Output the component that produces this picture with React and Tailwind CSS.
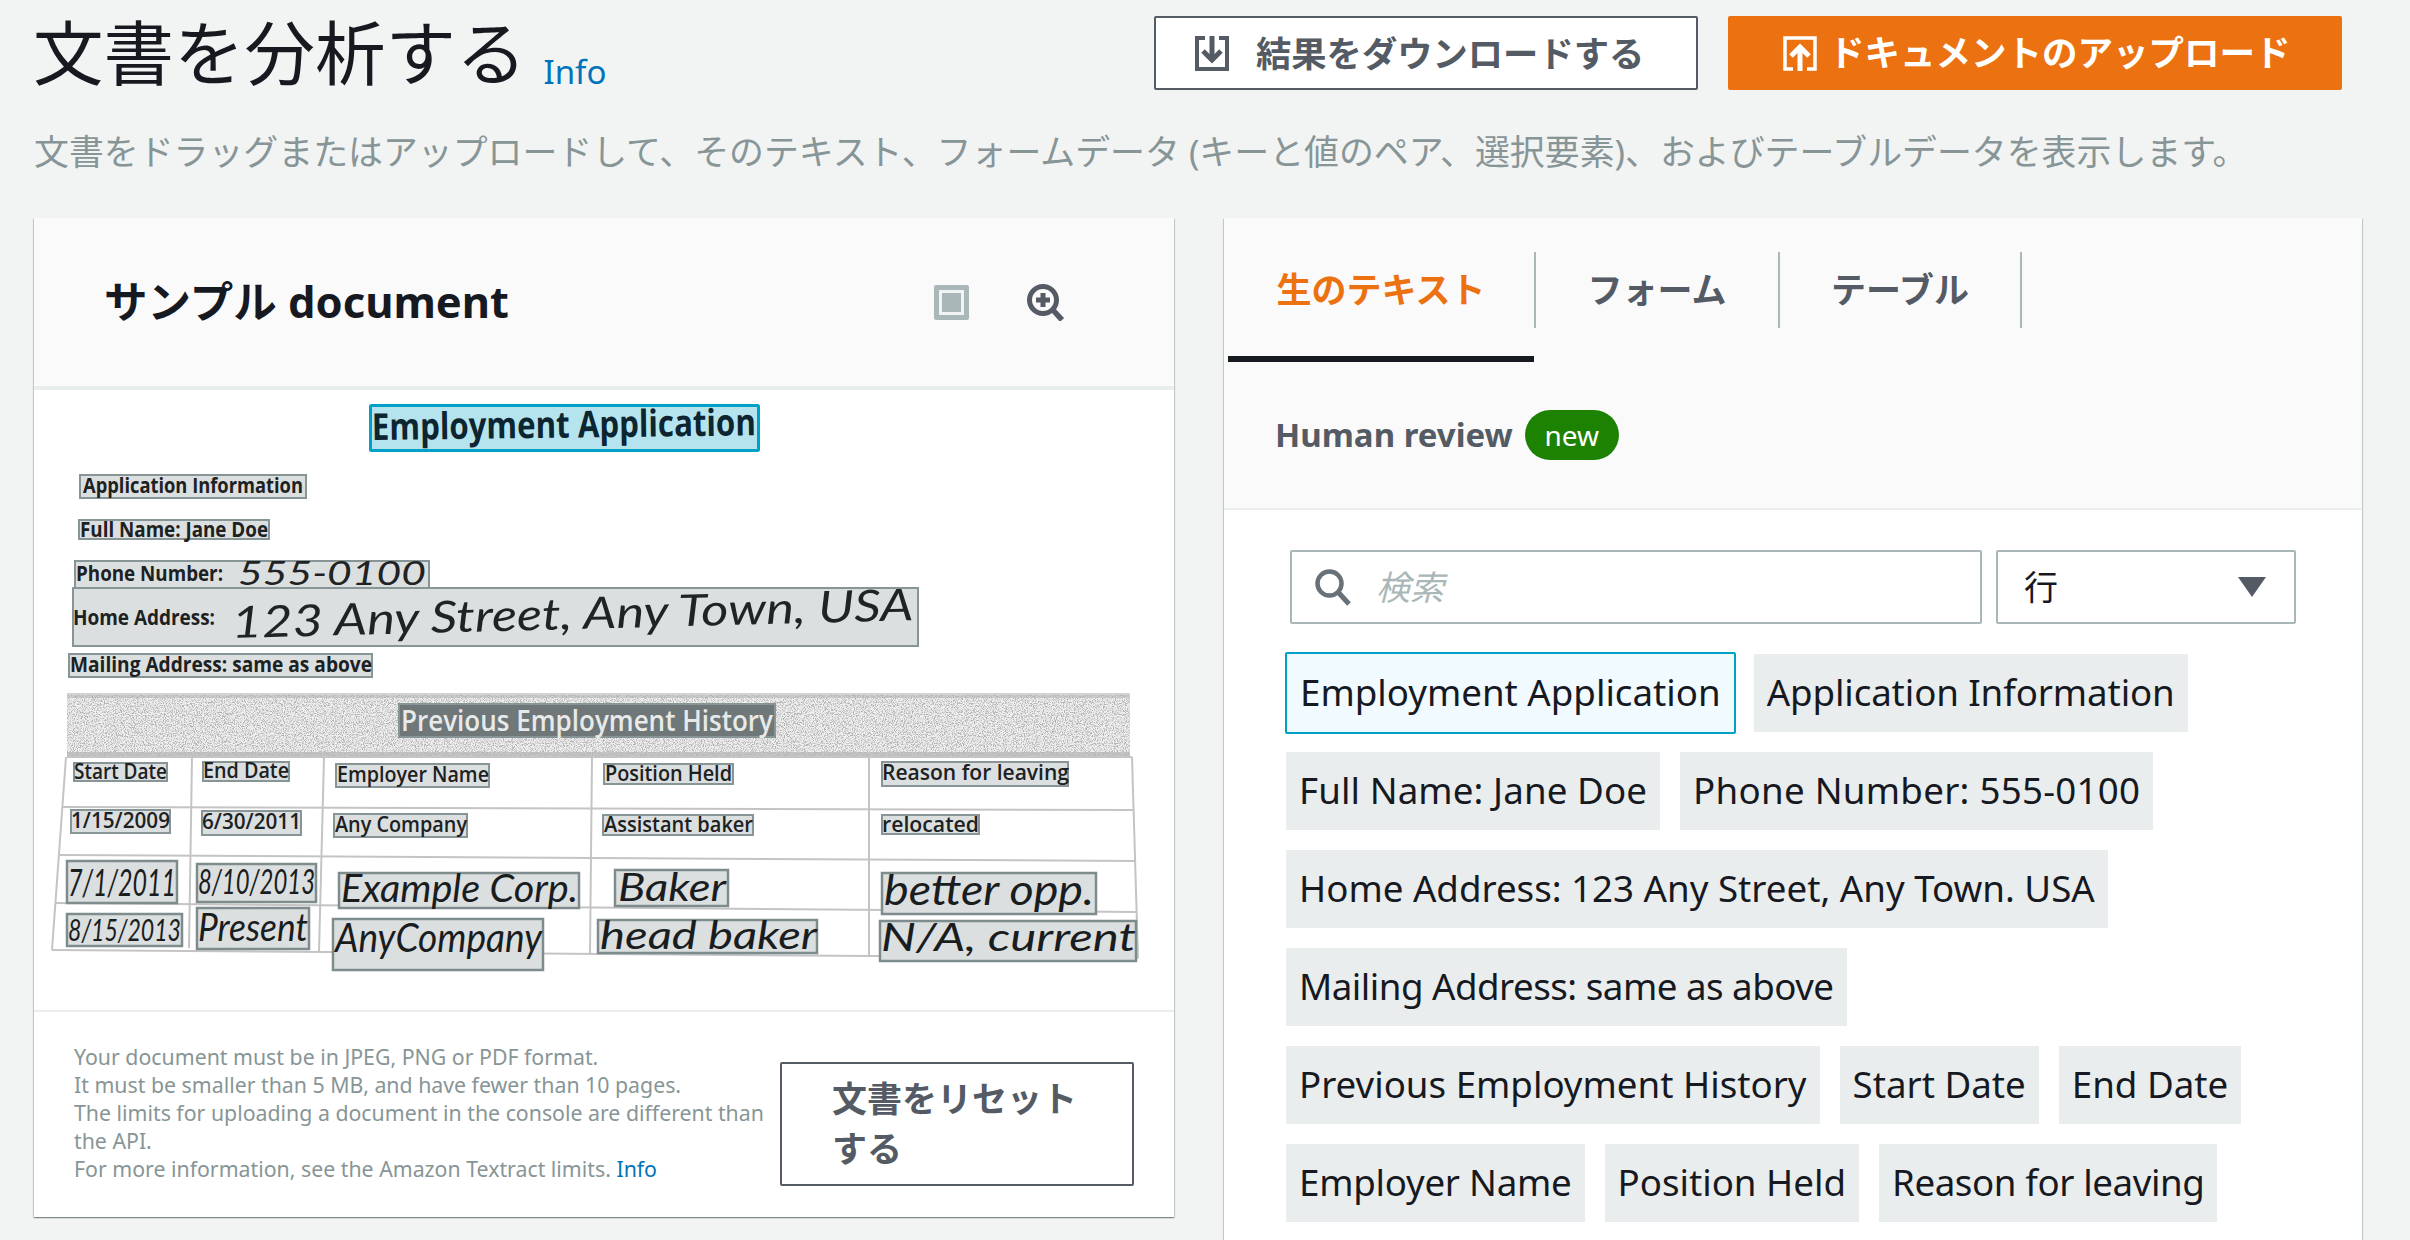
const sans = "font-['Noto_Sans','Noto_Sans_CJK_JP',sans-serif]"

const docBoxes = [
  [79, 474, 228, 25, "Application Information", 21, 83, 493, 220, true],
  [78, 519, 192, 21, "Full Name: Jane Doe", 21, 80, 537, 188, true],
  [74, 560, 356, 30, "Phone Number:", 21, 76, 581, 147, true],
  [72, 587, 847, 60, "Home Address:", 21, 73, 625, 142, true],
  [68, 653, 305, 25, "Mailing Address: same as above", 21, 70, 672, 302, true],
  [73, 762, 95, 20, "Start Date", 21, 74, 779, 93, false],
  [202, 761, 88, 21, "End Date", 21, 203, 778, 86, false],
  [335, 763, 155, 25, "Employer Name", 21, 337, 782, 152, false],
  [603, 763, 131, 22, "Position Held", 21, 605, 781, 127, false],
  [881, 761, 188, 26, "Reason for leaving", 21, 882, 780, 187, false],
  [70, 809, 101, 25, "1/15/2009", 21, 71, 828, 99, false],
  [201, 810, 101, 26, "6/30/2011", 21, 202, 829, 99, false],
  [333, 813, 135, 25, "Any Company", 21, 335, 832, 132, false],
  [602, 814, 152, 22, "Assistant baker", 21, 604, 832, 149, false],
  [881, 814, 99, 21, "relocated", 21, 882, 832, 97, false],
]

const handBoxes = [
  [66, 860, 112, 44, "7/1/2011", 36, 68, 896, 108],
  [196, 863, 121, 40, "8/10/2013", 34, 198, 894, 117],
  [338, 872, 242, 37, "Example Corp.", 38, 341, 902, 237],
  [614, 869, 115, 38, "Baker", 38, 618, 901, 108],
  [881, 872, 216, 43, "better opp.", 42, 884, 905, 210],
  [66, 913, 117, 34, "8/15/2013", 30, 68, 941, 113],
  [196, 907, 114, 43, "Present", 38, 198, 941, 110],
  [332, 918, 212, 53, "AnyCompany", 40, 335, 952, 207],
  [597, 919, 221, 35, "head baker", 38, 600, 949, 217],
  [879, 920, 258, 42, "N/A, current", 38, 881, 951, 255],
]

const tableLines = [
  "M67 757L1132 757", "M63 807L1134 810", "M60 855L1136 861", "M56 903L1137 912", "M52 950L1138 958",
  "M66 757L52 950", "M192 757L189 948", "M324 757L319 952", "M592 757L590 955", "M869 757L869 957", "M1132 757L1138 958",
]

const chipRows = [
  [["Full Name: Jane Doe", "tracking-[0.1px]"], ["Phone Number: 555-0100", "tracking-[0.27px]"]],
  [["Home Address: 123 Any Street, Any Town. USA", ""]],
  [["Mailing Address: same as above", "tracking-[-0.5px]"]],
  [["Previous Employment History", ""], ["Start Date", ""], ["End Date", ""]],
  [["Employer Name", "tracking-[-0.25px]"], ["Position Held", ""], ["Reason for leaving", "tracking-[-0.4px]"]],
]

function DocumentScan() {
  const hand = "'Lato', sans-serif"
  const print = "'Open Sans', sans-serif"
  return (
    <svg width="1140" height="620" viewBox="34 390 1140 620" className="block">
      <defs>
        <filter id="grain" x="0" y="0" width="100%" height="100%">
          <feTurbulence type="fractalNoise" baseFrequency="0.9" numOctaves="2" seed="4" />
          <feColorMatrix values="0 0 0 0 0.45  0 0 0 0 0.45  0 0 0 0 0.45  3 3 0 0 -2.75" />
        </filter>
      </defs>
      <rect x="34" y="390" width="1140" height="620" fill="#fff" />
      <rect x="67" y="695" width="1063" height="62" fill="#efefef" />
      <rect x="67" y="695" width="1063" height="62" filter="url(#grain)" />
      <rect x="67" y="693" width="1063" height="5" fill="#b5b5b5" opacity="0.6" />
      <rect x="67" y="752" width="1063" height="6" fill="#b5b5b5" opacity="0.7" />
      {tableLines.map((d) => (
        <path key={d} d={d} stroke="#c4c4c4" strokeWidth="2" fill="none" />
      ))}

      <rect x="370.5" y="405.5" width="388" height="45" rx="1" fill="#b5e4ef" stroke="#00a1c9" strokeWidth="3" />
      <text x="372" y="440" fontFamily={print} fontWeight="700" fontSize="37" textLength="384" lengthAdjust="spacingAndGlyphs" fill="#0c2530" transform="rotate(-0.7 372 440)">
        Employment Application
      </text>

      {docBoxes.map(([x, y, w, h, label, size, tx, ty, tw, bold]) => (
        <g key={label}>
          <rect x={x + 1} y={y + 1} width={w - 2} height={h - 2} fill="#dcdfe0" stroke="#879596" strokeWidth="2" />
          <text x={tx} y={ty} fontFamily={print} fontWeight={bold ? 700 : 600} fontSize={size} textLength={tw} lengthAdjust="spacingAndGlyphs" fill="#1c2122">
            {label}
          </text>
        </g>
      ))}
      <text x="238" y="585" fontFamily={hand} fontStyle="italic" fontSize="32" textLength="188" lengthAdjust="spacingAndGlyphs" fill="#1f2324">
        555-0100
      </text>
      <text x="232" y="638" fontFamily={hand} fontStyle="italic" fontSize="44" textLength="682" lengthAdjust="spacingAndGlyphs" fill="#1f2324" transform="rotate(-1.5 232 638)">
        123 Any Street, Any Town, USA
      </text>

      <rect x="399" y="704" width="376" height="33" fill="#6f7778" stroke="#879596" strokeWidth="2" />
      <text x="401" y="731" fontFamily={print} fontWeight="600" fontSize="29" textLength="372" lengthAdjust="spacingAndGlyphs" fill="#e8eaea">
        Previous Employment History
      </text>

      {handBoxes.map(([x, y, w, h, label, size, tx, ty, tw]) => (
        <g key={label}>
          <rect x={x + 1} y={y + 1} width={w - 2} height={h - 2} fill="#dcdfe0" stroke="#7f8c8d" strokeWidth="2.5" />
          <text x={tx} y={ty} fontFamily={hand} fontStyle="italic" fontSize={size} textLength={tw} lengthAdjust="spacingAndGlyphs" fill="#1a1d1e">
            {label}
          </text>
        </g>
      ))}
    </svg>
  )
}

export default function App() {
  return (
    <div className={`${sans} bg-[#f2f3f3] h-[1240px] w-[2410px] overflow-hidden`}>
      <div className="h-[218px]">
        <div className="flex items-start justify-between pl-[33px] pr-[68px] pt-[16px]">
          <div className="flex items-baseline gap-[17px] mt-[-5px]">
            <h1 className="text-[70.5px] leading-[84px] font-normal text-[#16191f]">文書を分析する</h1>
            <a className="text-[33px] text-[#0073bb] relative top-[4px]">Info</a>
          </div>
          <div className="flex gap-[30px]">
            <button className="w-[544px] h-[74px] bg-white border-2 border-[#545b64] rounded-[2px] flex items-center pl-[39px] gap-[27px] text-[35.3px] font-bold text-[#545b64]">
              <svg width="34" height="35" viewBox="0 0 34 35" fill="none">
                <path d="M10 2H2v31h30V2h-8" stroke="#545b64" strokeWidth="4" />
                <path d="M17 0v23" stroke="#545b64" strokeWidth="5" />
                <path d="M8 15l9 9 9-9" stroke="#545b64" strokeWidth="5" />
              </svg>
              結果をダウンロードする
            </button>
            <button className="w-[614px] h-[74px] bg-[#ec7211] rounded-[2px] flex items-center pl-[55px] gap-[12px] text-[35.5px] font-bold text-white">
              <svg width="34" height="35" viewBox="0 0 34 35" fill="none">
                <path d="M10 33H2V2h30v31h-8" stroke="#fff" strokeWidth="3.5" />
                <path d="M17 35V12" stroke="#fff" strokeWidth="5" />
                <path d="M8 20l9-9 9 9" stroke="#fff" strokeWidth="5" />
              </svg>
              ドキュメントのアップロード
            </button>
          </div>
        </div>
        <p className="pl-[34px] mt-[35px] text-[34.9px] leading-[44px] text-[#879596]">
          文書をドラッグまたはアップロードして、そのテキスト、フォームデータ (キーと値のペア、選択要素)、およびテーブルデータを表示します。
        </p>
      </div>

      <div className="flex items-start pl-[34px] gap-[50px]">
        <section className="w-[1140px] h-[999px] bg-white shadow-[0_1px_1px_0_rgba(0,28,36,0.3),1px_1px_1px_0_rgba(0,28,36,0.15),-1px_1px_1px_0_rgba(0,28,36,0.15)] flex flex-col">
          <div className="h-[172px] bg-[#fafafa] border-b-4 border-[#eaeded] flex items-center justify-between pl-[70px] pr-[110px]">
            <h2 className="text-[43.5px] font-bold text-[#16191f]">サンプル document</h2>
            <div className="flex items-center gap-[58px]">
              <svg width="35" height="35" viewBox="0 0 35 35">
                <rect width="35" height="35" rx="2" fill="#aab7b8" />
                <rect x="6.5" y="6.5" width="22" height="22" fill="none" stroke="#f2f3f3" strokeWidth="3" />
              </svg>
              <svg width="37" height="37" viewBox="0 0 37 37" fill="none">
                <circle cx="16" cy="16" r="13.5" stroke="#545b64" strokeWidth="5" />
                <path d="M16 9v14M9 16h14" stroke="#545b64" strokeWidth="5" />
                <path d="M26 26l9 10" stroke="#545b64" strokeWidth="5.5" />
              </svg>
            </div>
          </div>
          <DocumentScan />
          <div className="flex-1 border-t-2 border-[#eaeded] flex items-center pl-[40px] pr-[40px] gap-[14px]">
            <p className="w-[692px] mt-[-4px] text-[21.3px] leading-[28px] text-[#879596] shrink-0">
              Your document must be in JPEG, PNG or PDF format.
              <br />
              It must be smaller than 5 MB, and have fewer than 10 pages.
              <br />
              The limits for uploading a document in the console are different than the API.
              <br />
              For more information, see the Amazon Textract limits. <a className="text-[#0073bb]">Info</a>
            </p>
            <button className="w-[354px] h-[124px] mt-[18px] shrink-0 bg-white border-2 border-[#545b64] rounded-[2px] text-left pl-[50px] pr-[40px] text-[35px] leading-[50px] font-bold text-[#545b64]">
              文書をリセットする
            </button>
          </div>
        </section>

        <section className="w-[1138px] h-[1100px] bg-white shadow-[0_1px_1px_0_rgba(0,28,36,0.3),1px_1px_1px_0_rgba(0,28,36,0.15),-1px_1px_1px_0_rgba(0,28,36,0.15)]">
          <div className="h-[292px] bg-[#fafafa] border-b-2 border-[#eaeded]">
            <div className="flex pt-[34px] pl-[4px]">
              {[
                ["生のテキスト", "w-[308px] text-[#ec7211]"],
                ["フォーム", "w-[244px] text-[#545b64]"],
                ["テーブル", "w-[242px] text-[#545b64]"],
              ].map(([label, cls]) => (
                <div key={label} className={`${cls} h-[76px] border-r-2 border-[#aab7b8] flex items-center justify-center text-[35px] font-bold`}>
                  {label}
                </div>
              ))}
            </div>
            <div className="w-[306px] h-[6px] ml-[4px] mt-[28px] bg-[#16191f]" />
            <div className="flex items-center gap-[12px] pl-[51px] mt-[48px]">
              <span className="text-[33px] font-bold text-[#545b64]">Human review</span>
              <span className="w-[94px] h-[50px] rounded-[25px] bg-[#1d8102] text-white text-[28px] flex items-center justify-center">new</span>
            </div>
          </div>
          <div className="pl-[62px] pr-[66px] pt-[40px]">
            <div className="flex gap-[14px] ml-[4px]">
              <div className="w-[692px] h-[74px] bg-white border-2 border-[#aab7b8] rounded-[2px] flex items-center pl-[23px] gap-[24px]">
                <svg width="37" height="37" viewBox="0 0 37 37" fill="none">
                  <circle cx="14.5" cy="14.5" r="12" stroke="#687078" strokeWidth="4.5" />
                  <path d="M23 23l11 12" stroke="#687078" strokeWidth="5" />
                </svg>
                <span className="text-[34px] italic text-[#aab7b8]">検索</span>
              </div>
              <div className="w-[300px] h-[74px] bg-white border-2 border-[#aab7b8] rounded-[2px] flex items-center justify-between pl-[26px] pr-[28px]">
                <span className="text-[34px] text-[#16191f]">行</span>
                <svg width="28" height="20" viewBox="0 0 28 20">
                  <path d="M0 0h28L14 20z" fill="#545b64" />
                </svg>
              </div>
            </div>
            <div className="mt-[30px] flex flex-col gap-[20px]">
              <div className="flex items-center gap-[18px] -my-[2px]">
                <div className="h-[82px] px-[13px] bg-[#f1faff] border-2 border-[#00a1c9] rounded-[2px] flex items-center text-[36.7px] text-[#16191f] -ml-[1px]">
                  Employment Application
                </div>
                <div className="h-[78px] px-[13px] bg-[#eaeded] flex items-center text-[36.7px] tracking-[-0.1px] text-[#16191f]">
                  Application Information
                </div>
              </div>
              {chipRows.map((row) => (
                <div key={row[0][0]} className="flex gap-[20px]">
                  {row.map(([chip, spacing]) => (
                    <div key={chip} className={`${spacing} h-[78px] px-[13px] bg-[#eaeded] flex items-center text-[36.7px] text-[#16191f]`}>
                      {chip}
                    </div>
                  ))}
                </div>
              ))}
            </div>
          </div>
        </section>
      </div>
    </div>
  )
}
